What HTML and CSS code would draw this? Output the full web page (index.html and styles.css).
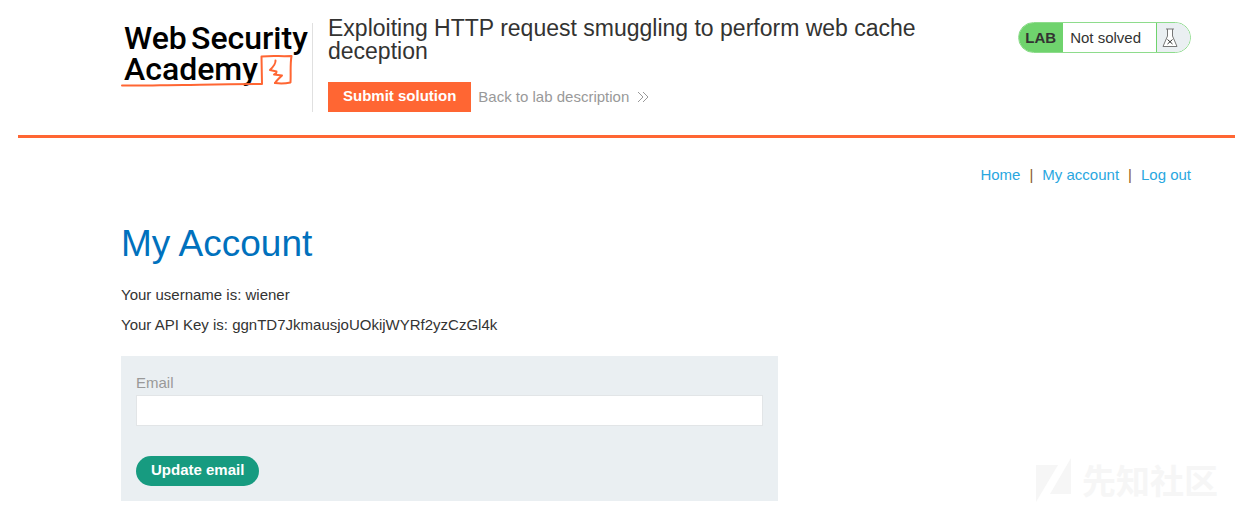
FILE: index.html
```html
<!DOCTYPE html>
<html lang="en">
<head>
<meta charset="utf-8">
<meta name="viewport" content="width=device-width, initial-scale=1">
<title>My Account</title>
<link rel="stylesheet" href="styles.css">
</head>
<body>
<header class="lab-header">
  <a class="logo" href="#" aria-label="Web Security Academy">
    <svg class="logo-art" width="190" height="70" viewBox="0 0 190 70">
      <g class="logo-text">
        <text x="3" y="29">Web</text>
        <text x="70" y="29">Security</text>
        <text x="3" y="60">Academy</text>
      </g>
      <g class="logo-mark">
        <path d="M1 65.500C24 66 42 65 62 65C90 64.500 105 64 141 64L140.500 36.500C151 35.500 160 36.500 170.500 36C169 45 170 54 169.500 62.500Q162 64 154 63"/>
        <path d="M154.500 40.500Q155 44 149 50L155.500 51.500Q155.500 54 153 54.500L161 55.500Q156 60 154 63"/>
      </g>
    </svg>
  </a>
  <div class="lab-title">
    <h2 class="title">Exploiting HTTP request smuggling to perform web cache deception</h2>
    <div class="actions">
      <button class="submit" type="button">Submit solution</button>
      <a class="back" href="#">Back to lab description
        <svg width="12" height="12" viewBox="0 0 12 12"><path d="M1 1L6 6L1 11M6 1L11 6L6 11"/></svg>
      </a>
    </div>
  </div>
  <div class="status">
    <span class="status-lab">LAB</span>
    <span class="status-text">Not solved</span>
    <span class="status-icon">
      <svg width="16" height="20" viewBox="0 0 16 20"><path class="glass" d="M4 1H12M5.500 1V8L1 18.500H15L10.500 8V1"/><path class="cross" d="M5.500 11.500L10.500 16M10.500 11.500L5.500 16"/></svg>
    </span>
  </div>
</header>
<main class="content">
  <nav class="nav">
    <a href="#">Home</a><span>|</span><a href="#">My account</a><span>|</span><a href="#">Log out</a>
  </nav>
  <h1 class="heading">My Account</h1>
  <p class="info">Your username is: wiener</p>
  <p class="info">Your API Key is: ggnTD7JkmausjoUOkijWYRf2yzCzGl4k</p>
  <form class="form">
    <label for="email">Email</label>
    <input id="email" type="email" name="email">
    <button class="update" type="button">Update email</button>
  </form>
</main>
<div class="watermark">
  <svg width="36" height="44" viewBox="0 0 36 44"><path d="M0 7H22L0 44ZM35 0V36H14Z"/></svg>
  <span>先知社区</span>
</div>
</body>
</html>
```
FILE: styles.css
```css
* {
  box-sizing: border-box;
}

body {
  margin: 0;
  padding-left: 18px;
  background: #fff;
  color: #333332;
  font: 15px/18px "Liberation Sans", Arial, sans-serif;
}

a {
  color: #29a7df;
  text-decoration: none;
}

button {
  border: 0;
  color: #fff;
  font: bold 15px/18px "Liberation Sans", Arial, sans-serif;
  height: 30px;
  padding: 0 15px 2px;
}

.lab-header {
  display: flex;
  align-items: flex-start;
  padding: 0 44px 23px 103px;
  border-bottom: 3px solid #ff6633;
}

.logo {
  flex: none;
  margin-top: 23px;
  height: 89px;
  width: 192px;
  border-right: 1px solid #e0e0e0;
}

.logo-art {
  display: block;
  margin-top: -3px;
}

.logo-text {
  fill: #000;
  font: 500 32px Roboto, sans-serif;
}

.logo-mark {
  fill: none;
  stroke: #ff6633;
  stroke-width: 2;
  stroke-linejoin: round;
  stroke-linecap: round;
}

.lab-title {
  flex: 1;
  padding: 17px 15px 0;
}

.title {
  margin: 0;
  max-width: 600px;
  font-size: 23px;
  font-weight: normal;
  line-height: 23px;
}

.actions {
  display: flex;
  align-items: center;
  gap: 7px;
  margin-top: 19px;
}

.submit {
  background: #ff6633;
}

.back {
  display: flex;
  align-items: center;
  gap: 8px;
  color: #999;
}

.back svg {
  fill: none;
  stroke: #999;
}

.status {
  display: flex;
  flex: none;
  height: 31px;
  margin-top: 22px;
  overflow: hidden;
  border: 1px solid #8edc8c;
  border-radius: 16px;
  line-height: 29px;
}

.status-lab {
  padding: 0 7px 0 6px;
  background: #6fd36d;
  font-weight: bold;
}

.status-text {
  padding: 0 15px 0 7px;
}

.status-icon {
  display: flex;
  align-items: center;
  width: 34px;
  padding-left: 5px;
  border-left: 1px solid #6fd36d;
  background: #eaeff2;
}

.glass {
  fill: #fff;
  stroke: #777;
}

.cross {
  fill: none;
  stroke: #333;
}

.content {
  padding: 28px 44px 4px 103px;
}

.nav {
  display: flex;
  justify-content: flex-end;
  gap: 9px;
}

.nav span {
  color: #8a5a2b;
}

.heading {
  margin: 38px 0 20px;
  color: #0071bd;
  font-size: 37px;
  font-weight: normal;
  line-height: 44px;
}

.info {
  margin: 0 0 12px;
}

.form {
  display: flex;
  flex-direction: column;
  align-items: flex-start;
  max-width: 657px;
  margin-top: 22px;
  padding: 18px 15px 15px;
  background: #eaeff2;
  color: #999;
}

.form input {
  width: 100%;
  height: 31px;
  margin: 3px 0 30px;
  padding: 0 8px;
  border: 1px solid #e2e5e7;
  font: inherit;
}

.update {
  border-radius: 15px;
  background: #179b80;
}

.watermark {
  position: absolute;
  right: 17px;
  bottom: 3px;
  display: flex;
  align-items: center;
  gap: 10px;
  color: #f6f6f6;
  font: bold 34px/44px "Noto Sans CJK SC", sans-serif;
}

.watermark svg {
  fill: #f6f6f6;
}
```
